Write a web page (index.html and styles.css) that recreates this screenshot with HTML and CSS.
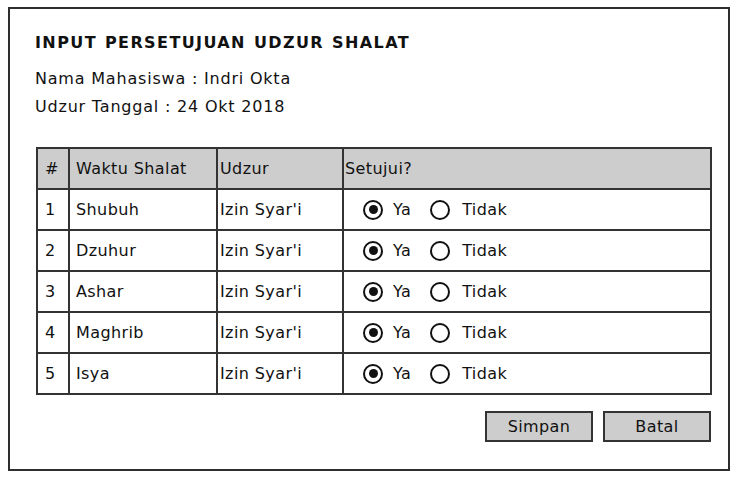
FILE: index.html
```html
<!DOCTYPE html>
<html>
<head>
<meta charset="utf-8">
<link rel="stylesheet" href="styles.css">
</head>
<body>
<div class="frame">
  <h1 class="title">INPUT PERSETUJUAN UDZUR SHALAT</h1>
  <div class="info">Nama Mahasiswa : Indri Okta</div>
  <div class="info">Udzur Tanggal : 24 Okt 2018</div>
  <table class="grid">
    <colgroup>
      <col class="w-no"><col class="w-waktu"><col class="w-udzur"><col class="w-setuju">
    </colgroup>
    <thead>
      <tr><th class="c1">#</th><th class="c2">Waktu Shalat</th><th class="c3">Udzur</th><th class="c4">Setujui?</th></tr>
    </thead>
    <tbody>
      <tr><td class="c1">1</td><td class="c2">Shubuh</td><td class="c3">Izin Syar'i</td><td class="c4"><div class="radios"><span class="radio on"></span><span class="lbl">Ya</span><span class="radio"></span><span class="lbl">Tidak</span></div></td></tr>
      <tr><td class="c1">2</td><td class="c2">Dzuhur</td><td class="c3">Izin Syar'i</td><td class="c4"><div class="radios"><span class="radio on"></span><span class="lbl">Ya</span><span class="radio"></span><span class="lbl">Tidak</span></div></td></tr>
      <tr><td class="c1">3</td><td class="c2">Ashar</td><td class="c3">Izin Syar'i</td><td class="c4"><div class="radios"><span class="radio on"></span><span class="lbl">Ya</span><span class="radio"></span><span class="lbl">Tidak</span></div></td></tr>
      <tr><td class="c1">4</td><td class="c2">Maghrib</td><td class="c3">Izin Syar'i</td><td class="c4"><div class="radios"><span class="radio on"></span><span class="lbl">Ya</span><span class="radio"></span><span class="lbl">Tidak</span></div></td></tr>
      <tr><td class="c1">5</td><td class="c2">Isya</td><td class="c3">Izin Syar'i</td><td class="c4"><div class="radios"><span class="radio on"></span><span class="lbl">Ya</span><span class="radio"></span><span class="lbl">Tidak</span></div></td></tr>
    </tbody>
  </table>
  <div class="actions">
    <button class="btn">Simpan</button>
    <button class="btn">Batal</button>
  </div>
</div>
</body>
</html>
```

FILE: styles.css
```css
html, body {
  margin: 0;
  padding: 0;
  background: #fff;
}
body {
  font-family: "Comic Sans MS", "DejaVu Sans", "Liberation Sans", sans-serif;
  color: #111;
  font-size: 16px;
}
.frame {
  box-sizing: border-box;
  margin: 7px 0 0 8px;
  width: 722px;
  height: 464px;
  border: 2px solid #2e2e2e;
  padding: 23px 0 0 25px;
}
.title {
  margin: 0;
  font-size: 16px;
  font-weight: bold;
  line-height: 22px;
  letter-spacing: 1.4px;
  word-spacing: 1px;
}
.info {
  line-height: 28px;
  font-size: 16px;
  letter-spacing: 0.8px;
}
.title + .info {
  margin-top: 11px;
}
.grid {
  margin-top: 26px;
  margin-left: 1px;
  border-collapse: collapse;
  width: 674px;
  table-layout: fixed;
}
.w-no { width: 32px; }
.w-waktu { width: 148px; }
.w-udzur { width: 126px; }
.w-setuju { width: 368px; }
.grid tr {
  height: 41px;
}
.grid th, .grid td {
  border: 2px solid #333;
  padding: 0;
  text-align: left;
  font-weight: normal;
  font-size: 16px;
  letter-spacing: 0.4px;
  white-space: nowrap;
  overflow: hidden;
}
.grid th {
  background: #cdcdcd;
}
.grid .c1 { padding-left: 7px; }
.grid .c2 { padding-left: 6px; }
.grid .c3 { padding-left: 2px; }
.grid .c4 { padding-left: 1px; }
.radios {
  display: flex;
  align-items: center;
  padding-left: 18px;
}
.radio {
  box-sizing: border-box;
  width: 20px;
  height: 20px;
  border: 2px solid #111;
  border-radius: 50%;
  display: flex;
  align-items: center;
  justify-content: center;
  flex: none;
}
.radio.on::after {
  content: "";
  width: 9px;
  height: 9px;
  border-radius: 50%;
  background: #111;
}
.lbl {
  margin-left: 10px;
  margin-right: 19px;
}
.lbl:last-child {
  margin-left: 12px;
}
.actions {
  display: flex;
  justify-content: flex-end;
  gap: 10px;
  width: 676px;
  margin-top: 16px;
}
.btn {
  box-sizing: border-box;
  width: 108px;
  height: 31px;
  background: #cdcdcd;
  border: 2px solid #333;
  border-radius: 0;
  font-family: inherit;
  font-size: 16px;
  letter-spacing: 0.4px;
  color: #111;
  padding: 0;
}
```
